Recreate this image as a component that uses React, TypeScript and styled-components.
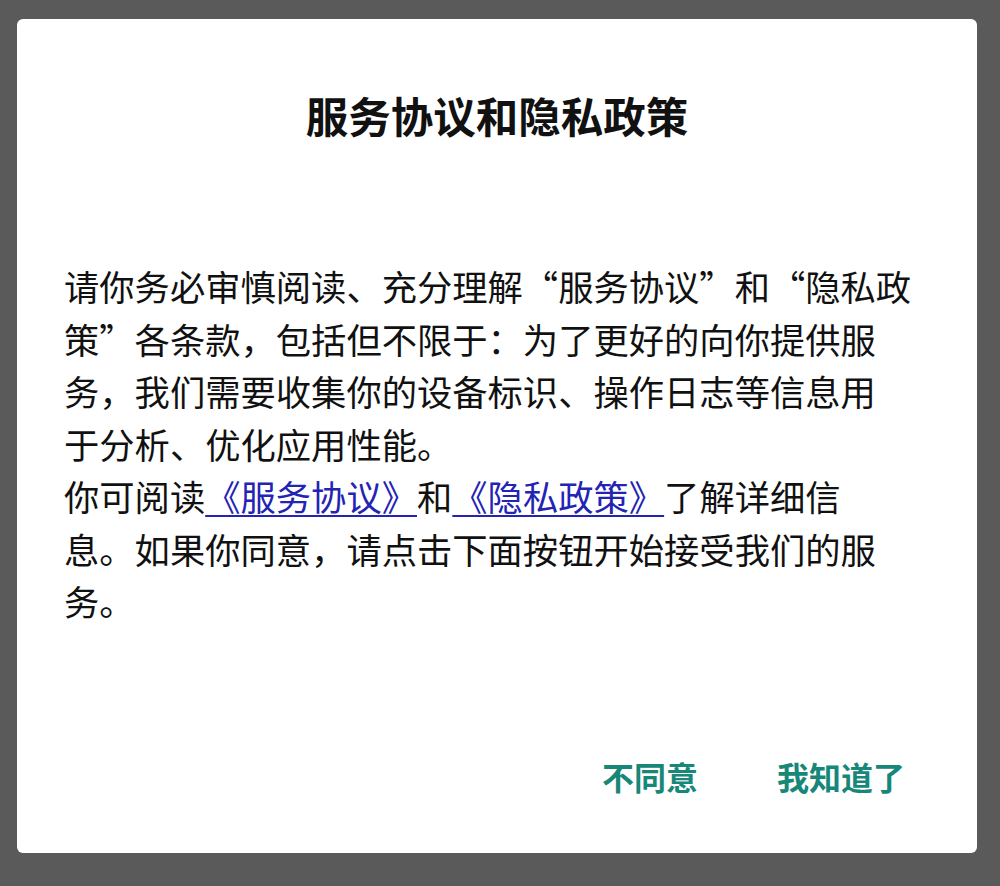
import React from 'react'
import styled, { createGlobalStyle } from 'styled-components'

const GlobalStyle = createGlobalStyle`
  html, body {
    margin: 0;
    padding: 0;
    background: #5a5a5a;
  }
  body {
    font-family: "Noto Sans CJK SC", "Noto Sans", sans-serif;
  }
`

const Screen = styled.div`
  box-sizing: border-box;
  width: 1000px;
  height: 886px;
  padding: 19px 23px 33px 17px;
  background: #5a5a5a;
`

const Dialog = styled.div`
  box-sizing: border-box;
  height: 100%;
  display: flex;
  flex-direction: column;
  background: #ffffff;
  border-radius: 6px;
  padding: 66px 0 55px 47px;
`

const Title = styled.h1`
  margin: 0;
  padding-right: 47px;
  text-align: center;
  font-size: 42.5px;
  line-height: 60px;
  font-weight: 700;
  color: #111;
`

const Body = styled.div`
  margin-top: 115px;
  width: 852px;
  font-size: 35.3px;
  line-height: 52.5px;
  color: #111;
`

const Paragraph = styled.p`
  margin: 0;
`

const Link = styled.a`
  color: #2323b4;
  text-decoration: underline;
  text-decoration-thickness: 2px;
  text-underline-offset: 4px;
`

const Actions = styled.div`
  margin-top: auto;
  display: flex;
  justify-content: flex-end;
  gap: 79px;
  padding-right: 72px;
`

const ActionButton = styled.button`
  border: 0;
  padding: 0;
  background: none;
  font-family: inherit;
  font-size: 32px;
  line-height: 44px;
  font-weight: 700;
  color: #17877a;
  cursor: pointer;
`

const App: React.FC = () => {
  return (
    <>
      <GlobalStyle />
      <Screen>
        <Dialog>
          <Title>服务协议和隐私政策</Title>
          <Body lang="zh-CN">
            <Paragraph>
              请你务必审慎阅读、充分理解“服务协议”和“隐私政策”各条款，包括但不限于：为了更好的向你提供服务，我们需要收集你的设备标识、操作日志等信息用
              <br />
              于分析、优化应用性能。
            </Paragraph>
            <Paragraph>
              你可阅读<Link href="#">《服务协议》</Link>和<Link href="#">《隐私政策》</Link>了解详细信
              <br />
              息。如果你同意，请点击下面按钮开始接受我们的服务。
            </Paragraph>
          </Body>
          <Actions>
            <ActionButton>不同意</ActionButton>
            <ActionButton>我知道了</ActionButton>
          </Actions>
        </Dialog>
      </Screen>
    </>
  )
}

export default App
